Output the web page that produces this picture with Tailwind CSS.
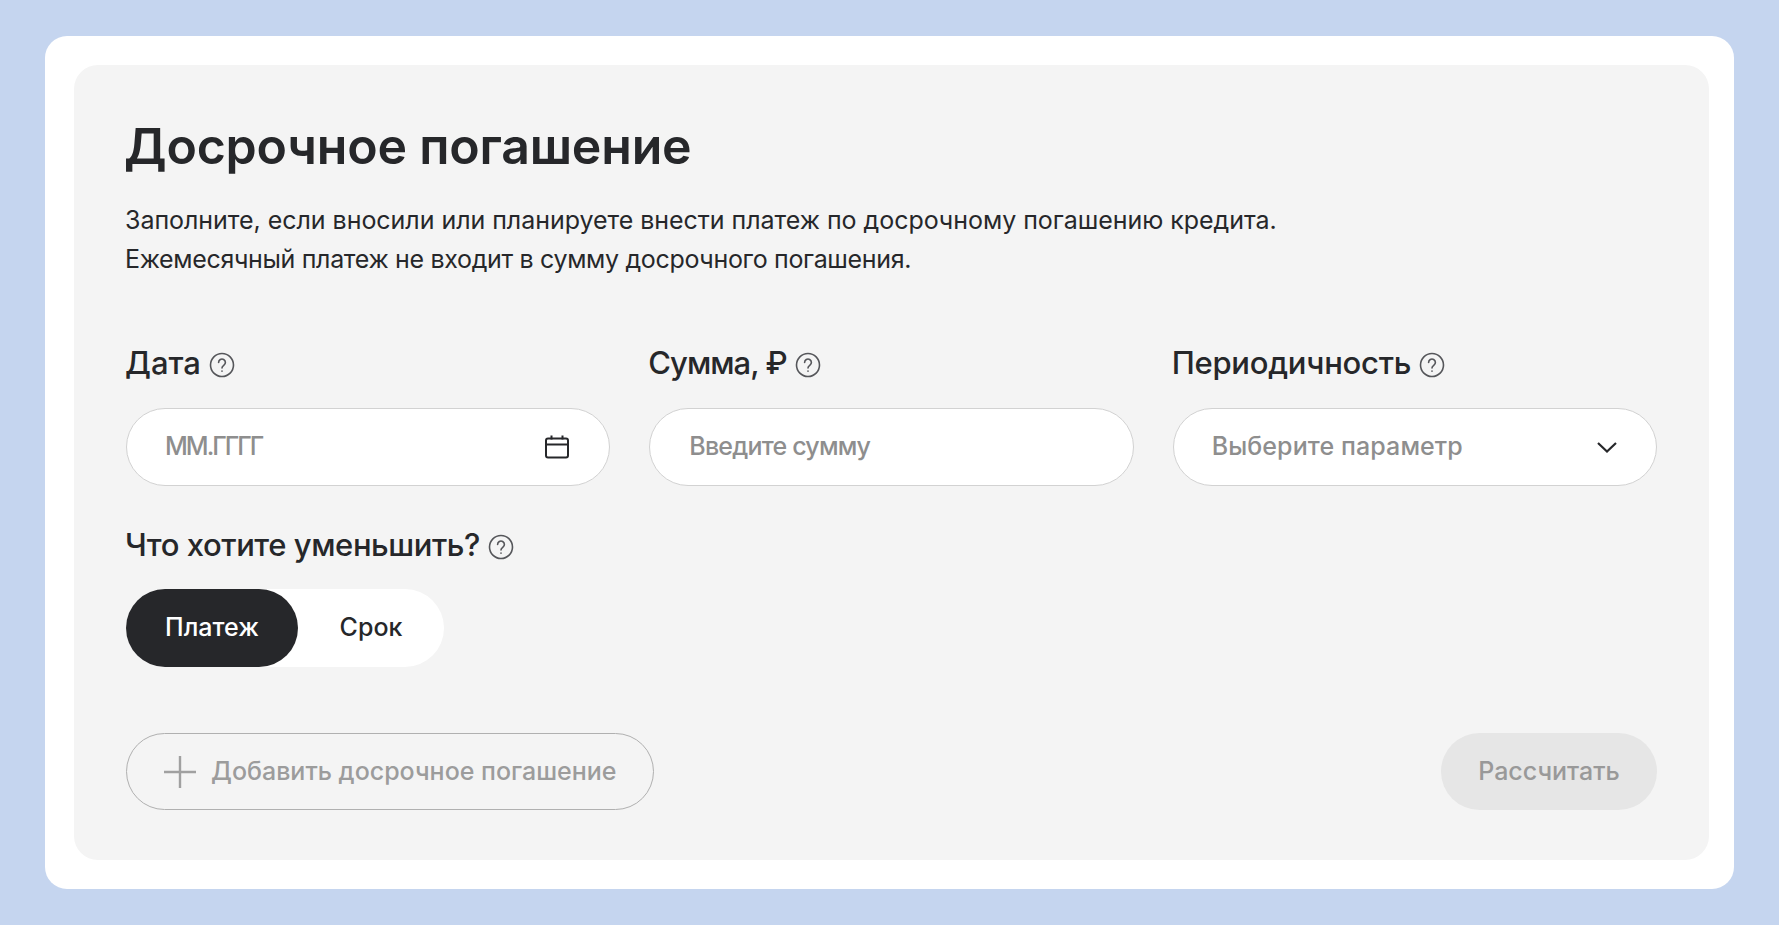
<!DOCTYPE html>
<html lang="ru">
<head>
    <meta charset="UTF-8">
    <meta name="viewport" content="width=device-width, initial-scale=1.0">
    <title>Досрочное погашение</title>
    <script src="https://cdn.jsdelivr.net/npm/@tailwindcss/browser@4"></script>
</head>
<body class="h-[925px] bg-[#c5d5ef] pt-9 px-[45px] font-['Inter',sans-serif] text-[#26272a] overflow-hidden">
    <div class="h-[853px] bg-white rounded-[22px] pt-[29px] pl-[29px] pr-[25px]">
        <div class="h-[795px] bg-[#f4f4f4] rounded-[24px] pt-[50px] px-[52px]">
            <h1 class="-ml-0.5 text-[50px] leading-[62px] font-semibold tracking-[-0.2px]">Досрочное погашение</h1>
            <p class="mt-6 -ml-px text-[25px] leading-[39px]">
                <span class="tracking-[-0.04px]">Заполните, если вносили или планируете внести платеж по досрочному погашению кредита.</span><br>
                <span class="tracking-[-0.33px]">Ежемесячный платеж не входит в сумму досрочного погашения.</span>
            </p>
            <div class="mt-[64px] grid grid-cols-3 gap-x-[39px]">
                <div>
                    <div class="flex items-center gap-2 h-10 text-[31px] font-medium">
                        <span class="-ml-px">Дата</span>
                        <svg class="w-[26px] h-[26px] mt-1 text-[#55565a]" viewBox="0 0 26 26" fill="none" stroke="currentColor" stroke-width="1.6" stroke-linecap="round"><circle cx="13" cy="13" r="11.5"/><path d="M9.6 10.4a3.4 3.4 0 1 1 5.2 2.9c-1.2.8-1.8 1.4-1.8 2.7"/><path d="M13 19v.2"/></svg>
                    </div>
                    <div class="mt-[25px] h-[78px] flex items-center justify-between bg-white border border-[#d2d2d2] rounded-full pl-[38px] pr-[39px] text-[25px] font-medium text-[#8e8e8e]">
                        <span class="tracking-[-2px]">ММ.ГГГГ</span>
                        <svg class="w-[26px] h-[26px] text-[#26272a]" viewBox="0 0 26 26" fill="none" stroke="currentColor" stroke-width="2"><rect x="2" y="4.5" width="22" height="19" rx="2"/><path d="M2 10.5h22M7.5 1.5v4M18.5 1.5v4"/></svg>
                    </div>
                </div>
                <div>
                    <div class="flex items-center gap-2 h-10 text-[31px] font-medium">
                        <span class="-ml-px tracking-[-1px]">Сумма, ₽</span>
                        <svg class="w-[26px] h-[26px] mt-1 text-[#55565a]" viewBox="0 0 26 26" fill="none" stroke="currentColor" stroke-width="1.6" stroke-linecap="round"><circle cx="13" cy="13" r="11.5"/><path d="M9.6 10.4a3.4 3.4 0 1 1 5.2 2.9c-1.2.8-1.8 1.4-1.8 2.7"/><path d="M13 19v.2"/></svg>
                    </div>
                    <div class="mt-[25px] h-[78px] flex items-center bg-white border border-[#d2d2d2] rounded-full pl-[39px] text-[25px] font-medium text-[#8e8e8e]"><span class="tracking-[-0.8px]">Введите сумму</span></div>
                </div>
                <div>
                    <div class="flex items-center gap-2 h-10 text-[31px] font-medium">
                        <span class="-ml-px tracking-[-0.25px]">Периодичность</span>
                        <svg class="w-[26px] h-[26px] mt-1 text-[#55565a]" viewBox="0 0 26 26" fill="none" stroke="currentColor" stroke-width="1.6" stroke-linecap="round"><circle cx="13" cy="13" r="11.5"/><path d="M9.6 10.4a3.4 3.4 0 1 1 5.2 2.9c-1.2.8-1.8 1.4-1.8 2.7"/><path d="M13 19v.2"/></svg>
                    </div>
                    <div class="mt-[25px] h-[78px] flex items-center justify-between bg-white border border-[#d2d2d2] rounded-full pl-[39px] pr-[38px] text-[25px] font-medium text-[#8e8e8e]">
                        <span class="-ml-px tracking-[0.1px]">Выберите параметр</span>
                        <svg class="w-[22px] h-3 text-[#26272a]" viewBox="0 0 22 12" fill="none" stroke="currentColor" stroke-width="2.2"><path d="M2 2l9 8.5L20 2"/></svg>
                    </div>
                </div>
            </div>
            <div class="mt-[39px] flex items-center gap-2 h-10 text-[31px] font-medium">
                <span class="-ml-px tracking-[-0.43px]">Что хотите уменьшить?</span>
                <svg class="w-[26px] h-[26px] mt-1 text-[#55565a]" viewBox="0 0 26 26" fill="none" stroke="currentColor" stroke-width="1.6" stroke-linecap="round"><circle cx="13" cy="13" r="11.5"/><path d="M9.6 10.4a3.4 3.4 0 1 1 5.2 2.9c-1.2.8-1.8 1.4-1.8 2.7"/><path d="M13 19v.2"/></svg>
            </div>
            <div class="mt-6 flex w-[318px] h-[78px] bg-white rounded-[39px] text-[25px] font-medium">
                <div class="w-[172px] flex items-center justify-center bg-[#26272a] text-white rounded-[39px]">Платеж</div>
                <div class="flex-1 flex items-center justify-center">Срок</div>
            </div>
            <div class="mt-[66px] flex items-center justify-between">
                <div class="w-[528px] h-[77px] flex items-center gap-[15px] pl-[37px] border border-[#b0b0b0] rounded-full text-[25px] font-medium text-[#9c9c9c] whitespace-nowrap">
                    <svg class="w-8 h-8 shrink-0 text-[#a0a0a0]" viewBox="0 0 32 32" fill="none" stroke="currentColor" stroke-width="2.4"><path d="M16 0v32M0 16h32"/></svg>
                    Добавить досрочное погашение
                </div>
                <div class="w-[216px] h-[77px] flex items-center justify-center bg-[#e6e6e6] rounded-full text-[25px] font-medium text-[#999999]">Рассчитать</div>
            </div>
        </div>
    </div>
</body>
</html>
